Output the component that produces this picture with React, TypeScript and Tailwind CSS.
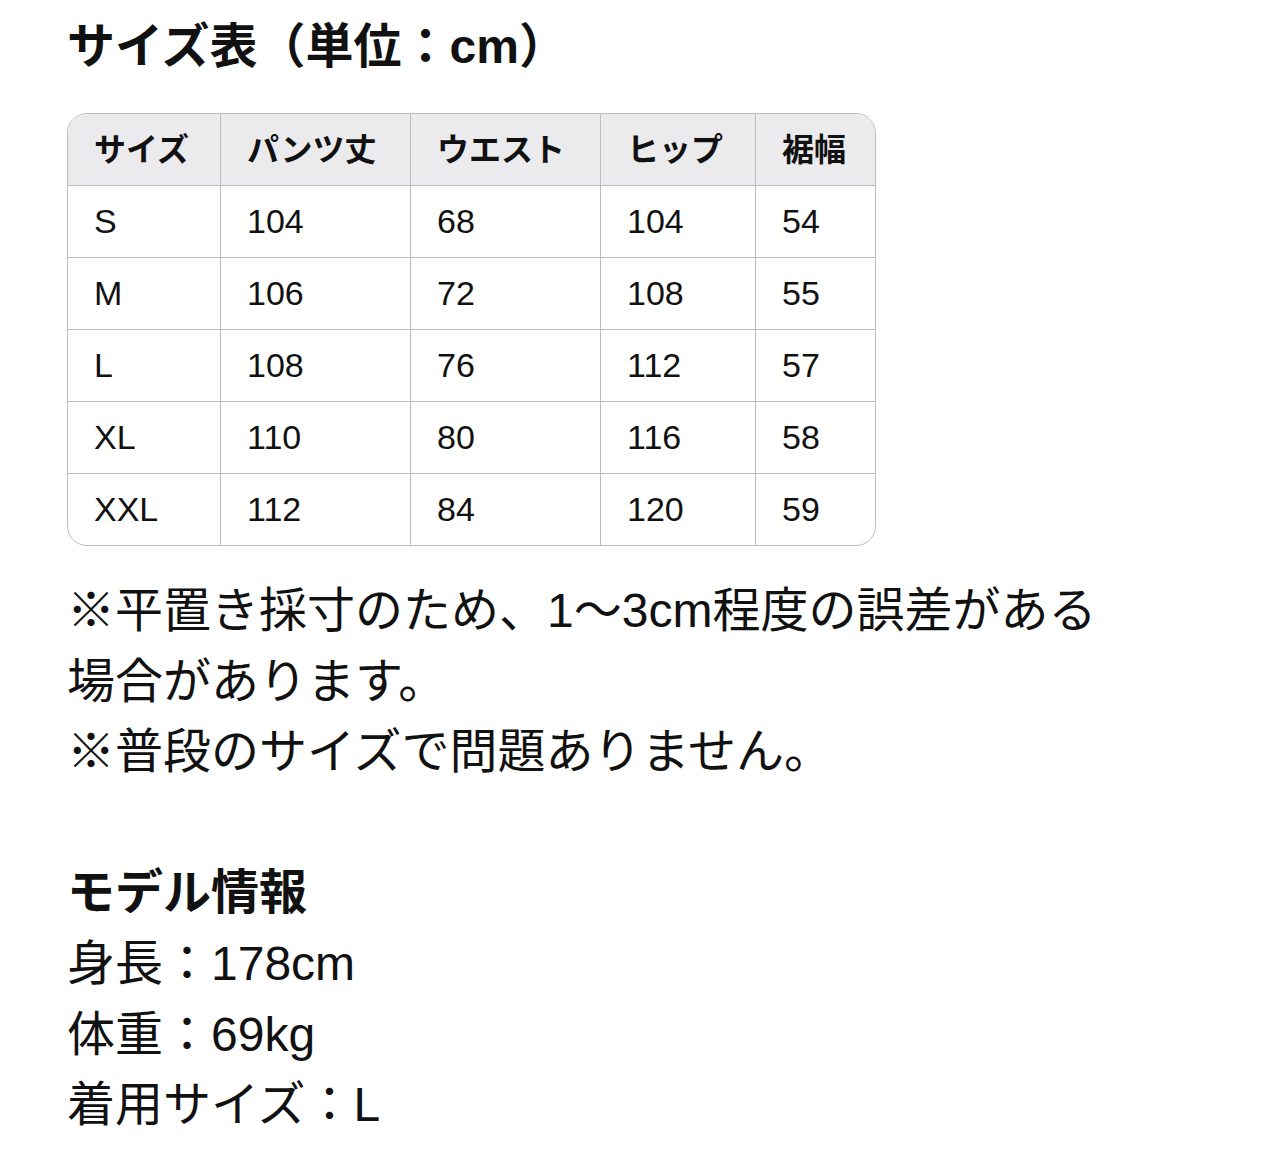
import React from 'react';

const headers = ['サイズ', 'パンツ丈', 'ウエスト', 'ヒップ', '裾幅'];

const rows = [
    ['S', '104', '68', '104', '54'],
    ['M', '106', '72', '108', '55'],
    ['L', '108', '76', '112', '57'],
    ['XL', '110', '80', '116', '58'],
    ['XXL', '112', '84', '120', '59'],
];

const font = { fontFamily: '"Liberation Sans", "Noto Sans CJK JP", sans-serif' };

const App: React.FC = () => {
    return (
        <div className="min-h-[1175px] bg-white pl-[67px] pt-[11px] text-[#111111]" style={font}>
            <h1 className="text-[48px] font-bold leading-[72px]">サイズ表（単位：cm）</h1>

            <div className="mt-[30px] w-[809px] overflow-hidden rounded-[20px] border border-[#bdbdbd]">
                <div className="grid grid-cols-[152px_190px_190px_155px_120px] bg-[#ebebed]">
                    {headers.map((h, i) => (
                        <div
                            key={h}
                            className={`flex h-[71px] items-center pl-[26px] text-[32px] font-bold ${i > 0 ? 'border-l border-[#bdbdbd]' : ''}`}
                        >
                            {h}
                        </div>
                    ))}
                </div>
                {rows.map((row) => (
                    <div key={row[0]} className="grid grid-cols-[152px_190px_190px_155px_120px] border-t border-[#bdbdbd]">
                        {row.map((cell, i) => (
                            <div
                                key={i}
                                className={`flex h-[71px] items-center pl-[26px] text-[34px] ${i > 0 ? 'border-l border-[#bdbdbd]' : ''}`}
                            >
                                {cell}
                            </div>
                        ))}
                    </div>
                ))}
            </div>

            <div className="mt-[30px] text-[48px] leading-[70.6px]">
                <p>
                    ※平置き採寸のため、1〜3cm程度の誤差がある
                    <br />
                    場合があります。
                </p>
                <p>※普段のサイズで問題ありません。</p>
                <p>&nbsp;</p>
                <p className="font-bold">モデル情報</p>
                <p>身長：178cm</p>
                <p>体重：69kg</p>
                <p>着用サイズ：L</p>
            </div>
        </div>
    );
};

export default App;
